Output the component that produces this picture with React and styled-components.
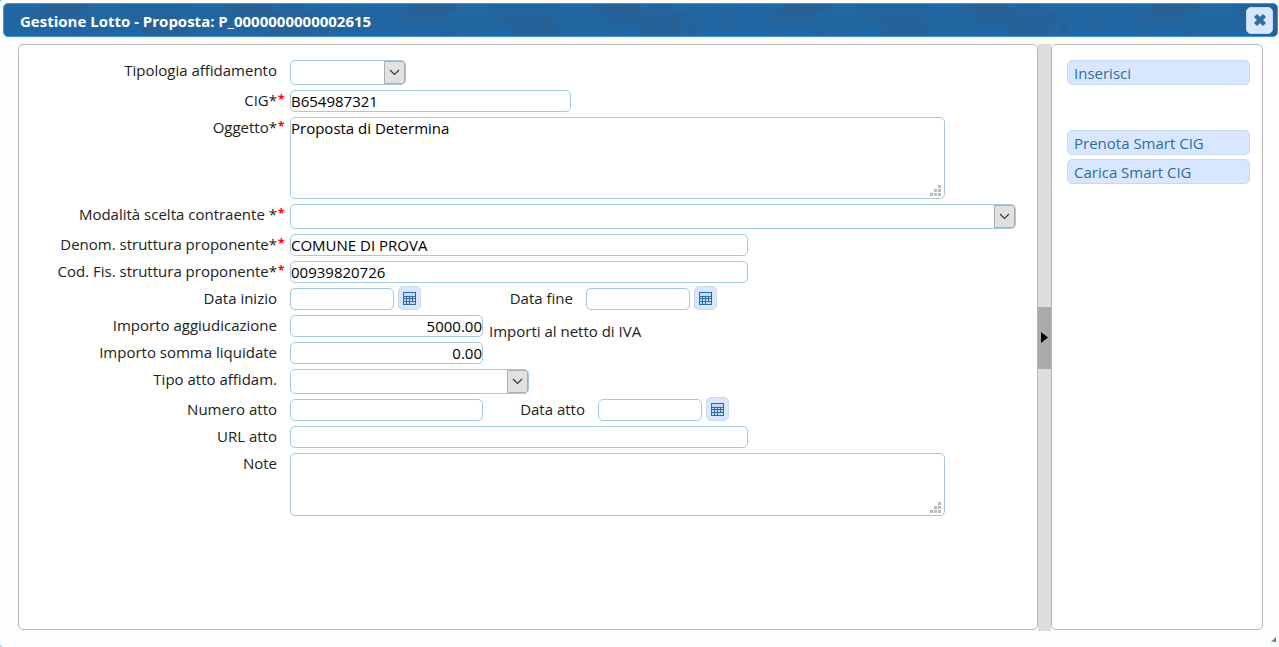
import { useState } from "react";
import styled, { createGlobalStyle } from "styled-components";

export default function App() {
  const [lotto, setLotto] = useState({
    cig: "B654987321",
    oggetto: "Proposta di Determina",
    denominazione: "COMUNE DI PROVA",
    codiceFiscale: "00939820726",
    dataInizio: "",
    dataFine: "",
    aggiudicazione: "5000.00",
    liquidate: "0.00",
    numeroAtto: "",
    dataAtto: "",
    urlAtto: "",
    note: "",
  });

  const bind = (name) => ({
    id: name,
    name,
    value: lotto[name],
    onChange: (e) => setLotto({ ...lotto, [name]: e.target.value }),
  });

  return (
    <Dialog>
      <GlobalStyle />
      <TitleBar>
        <TitlePattern />
        <Title>Gestione Lotto - Proposta: P_0000000000002615</Title>
        <CloseButton type="button" aria-label="Chiudi">
          <CloseIcon />
        </CloseButton>
      </TitleBar>
      <Body>
        <FormPanel>
          <Field id="tipologia" label="Tipologia affidamento">
            <Combo id="tipologia" width="116px" />
          </Field>
          <Field id="cig" label="CIG*" required>
            <Input $width="281px" {...bind("cig")} />
          </Field>
          <Field id="oggetto" label="Oggetto*" required>
            <Area height="82px" {...bind("oggetto")} />
          </Field>
          <Field id="modalita" label="Modalità scelta contraente *" required>
            <Combo id="modalita" width="726px" />
          </Field>
          <Field id="denominazione" label="Denom. struttura proponente*" required>
            <Input $width="458px" {...bind("denominazione")} />
          </Field>
          <Field id="codiceFiscale" label="Cod. Fis. struttura proponente*" required>
            <Input $width="458px" {...bind("codiceFiscale")} />
          </Field>
          <Field id="dataInizio" label="Data inizio">
            <DateBox {...bind("dataInizio")} />
            <Label htmlFor="dataFine" $width="152px">
              Data fine
            </Label>
            <Mark />
            <DateBox {...bind("dataFine")} />
          </Field>
          <Amounts>
            <Rows>
              <Field id="aggiudicazione" label="Importo aggiudicazione">
                <Input $width="193px" $right {...bind("aggiudicazione")} />
              </Field>
              <Field id="liquidate" label="Importo somma liquidate">
                <Input $width="193px" $right {...bind("liquidate")} />
              </Field>
            </Rows>
            <Hint>Importi al netto di IVA</Hint>
          </Amounts>
          <Field id="tipoAtto" label="Tipo atto affidam.">
            <Combo id="tipoAtto" width="239px" />
          </Field>
          <Field id="numeroAtto" label="Numero atto">
            <Input $width="193px" {...bind("numeroAtto")} />
            <Label htmlFor="dataAtto" $width="102px">
              Data atto
            </Label>
            <Mark />
            <DateBox {...bind("dataAtto")} />
          </Field>
          <Field id="urlAtto" label="URL atto">
            <Input $width="458px" {...bind("urlAtto")} />
          </Field>
          <Field id="note" label="Note">
            <Area height="63px" {...bind("note")} />
          </Field>
        </FormPanel>
        <Splitter>
          <Handle type="button" aria-label="Comprimi pannello">
            <svg width="7" height="11" viewBox="0 0 7 11">
              <path d="M0 0L7 5.5L0 11Z" fill="#000" />
            </svg>
          </Handle>
        </Splitter>
        <ActionPanel>
          <Action type="button">Inserisci</Action>
          <ActionGroup>
            <Action type="button">Prenota Smart CIG</Action>
            <Action type="button">Carica Smart CIG</Action>
          </ActionGroup>
        </ActionPanel>
      </Body>
      <ResizeCorner width="5" height="5" viewBox="0 0 5 5">
        <path d="M5 0V5H0Z" fill="#5d7385" />
        <path d="M2 4h2v1h-2z" fill="#7db6dc" />
        <path d="M1 4h1v1h-1zM3 2h1v1h-1z" fill="#c98a4a" />
      </ResizeCorner>
    </Dialog>
  );
}

function Field({ id, label, required, children }) {
  return (
    <Row>
      <Label htmlFor={id}>{label}</Label>
      <Mark>{required && "*"}</Mark>
      {children}
    </Row>
  );
}

function Combo({ id, width }) {
  return (
    <ComboBox $width={width}>
      <Select id={id} name={id} defaultValue="">
        <option value=""></option>
      </Select>
      <ComboArrow>
        <svg width="11" height="7" viewBox="0 0 11 7" fill="none">
          <path d="M1 1L5.5 5.5L10 1" stroke="#333" strokeWidth="1.1" />
        </svg>
      </ComboArrow>
    </ComboBox>
  );
}

function Area({ height, ...props }) {
  return (
    <AreaBox>
      <TextArea $height={height} {...props} />
      <Grip width="11" height="11" viewBox="0 0 11 11">
        <path
          d="M8 0h3v3h-3zM4 4h3v3h-3zM8 4h3v3h-3zM0 8h3v3h-3zM4 8h3v3h-3zM8 8h3v3h-3z"
          fill="#bbb"
        />
      </Grip>
    </AreaBox>
  );
}

function DateBox(props) {
  return (
    <>
      <Input $width="104px" {...props} />
      <CalendarButton type="button" aria-label="Apri calendario">
        <svg width="13" height="13" viewBox="0 0 13 13" shapeRendering="crispEdges">
          <path d="M0 0h13v13h-13z" fill="#2e6e9e" />
          <path d="M1 1h11v3h-11z" fill="#c6daf4" />
          <path
            d="M1 5h2v1h-2zM4 5h2v1h-2zM7 5h2v1h-2zM10 5h2v1h-2zM1 7h2v2h-2zM4 7h2v2h-2zM7 7h2v2h-2zM10 7h2v2h-2zM1 10h2v2h-2zM4 10h2v2h-2zM7 10h5v2h-5z"
            fill="#c6daf4"
          />
        </svg>
      </CalendarButton>
    </>
  );
}

function CloseIcon() {
  return (
    <svg width="12" height="12" viewBox="0 0 12 12">
      <path
        d="M3 0.5L6 3.4L9 0.5L11.5 3L8.6 6L11.5 9L9 11.5L6 8.6L3 11.5L0.5 9L3.4 6L0.5 3Z"
        fill="#2e6e9e"
        stroke="#2e6e9e"
        strokeLinejoin="round"
      />
    </svg>
  );
}

function TitlePattern() {
  return (
    <PatternSvg aria-hidden="true">
      <defs>
        <pattern
          id="roofs"
          width="370"
          height="32"
          patternUnits="userSpaceOnUse"
          patternTransform="translate(26 0)"
        >
          <path d="M16 0H62L40 17H0V12Z" fill="#266198" />
          <path d="M62 0H84L104 17H40Z" fill="#22679f" />
          <path d="M96 9H154V17H158V32H114L112 22Z" fill="#266198" />
          <path d="M84 0H158V8H96Z" fill="#21659f" />
          <path d="M200 0H237L244 8H290L276 32H240V18H204V9H187Z" fill="#266198" />
          <path
            d="M160 18h8v14h-8zM174 18h8v14h-8zM190 18h7v14h-7zM208 18h10v14h-10zM222 18h7v14h-7z"
            fill="#23659d"
          />
          <path d="M250 0h22v7h-22zM292 9h15v7h-15zM322 4h18v22h-18z" fill="#22659e" />
          <circle cx="294" cy="25" r="5" fill="#266198" />
          <circle cx="48" cy="29" r="4" fill="#266198" />
          <path d="M0 26h12v6h-12zM22 24h10v8h-10zM62 17h10v15h-10zM77 26l6-8v14h-6z" fill="#23659d" />
        </pattern>
      </defs>
      <rect width="100%" height="100%" fill="url(#roofs)" />
    </PatternSvg>
  );
}

const GlobalStyle = createGlobalStyle`
  * {
    box-sizing: border-box;
  }
  body {
    margin: 0;
    background: #a6c9e2;
    color: #222;
  }
  body, input, select, textarea, button {
    font-family: "Open Sans", "Noto Sans", sans-serif;
    font-size: 15px;
  }
`;

const Dialog = styled.div`
  position: relative;
  display: flex;
  flex-direction: column;
  min-height: 100vh;
  padding: 3px 1px 0 3px;
  border-radius: 4px 0 0 4px;
  background: #fcfdfd;
`;

const TitleBar = styled.header`
  position: relative;
  display: flex;
  justify-content: space-between;
  align-items: center;
  height: 34px;
  padding: 0 4px 0 16px;
  border: 1px solid #4297d7;
  border-radius: 5px;
  background: #2066a2;
  overflow: hidden;
`;

const PatternSvg = styled.svg`
  position: absolute;
  inset: 0;
  width: 100%;
  height: 100%;
`;

const Title = styled.h1`
  position: relative;
  margin: 0;
  padding-top: 2px;
  color: #fff;
  font-size: 15px;
  font-weight: 700;
  line-height: 22px;
`;

const CloseButton = styled.button`
  position: relative;
  display: flex;
  justify-content: center;
  align-items: center;
  width: 27px;
  height: 27px;
  padding: 0;
  border: 1px solid #c5dbec;
  border-radius: 5px;
  background: #d9e6ff;
`;

const Body = styled.main`
  display: flex;
  flex: 1;
  padding: 7px 15px 16px;
`;

const FormPanel = styled.form`
  display: flex;
  flex: 1;
  flex-direction: column;
  gap: 5px;
  min-width: 0;
  margin-bottom: 1px;
  padding: 15px 0;
  border: 1px solid #b8b8b8;
  border-radius: 5px;
  background: #fff;
`;

const Rows = styled.div`
  display: flex;
  flex-direction: column;
  gap: 5px;
`;

const Amounts = styled.div`
  display: flex;
  gap: 6px;
`;

const Row = styled.div`
  display: flex;
  align-items: flex-start;
`;

const Label = styled.label`
  width: ${({ $width }) => $width || "258px"};
  line-height: 20px;
  text-align: right;
  white-space: nowrap;
`;

const Mark = styled.span`
  width: 13px;
  padding-left: 1px;
  color: #f00;
  font-size: 12px;
  font-weight: 700;
  line-height: 20px;
`;

const Hint = styled.span`
  padding-top: 6px;
  line-height: 20px;
`;

const Input = styled.input`
  width: ${({ $width }) => $width};
  height: 22px;
  padding: 0;
  border: 1px solid #a6c9e2;
  border-radius: 5px;
  background: #fff;
  color: #000;
  text-align: ${({ $right }) => ($right ? "right" : "left")};
`;

const AreaBox = styled.div`
  position: relative;
  display: flex;
  width: 655px;
`;

const TextArea = styled.textarea`
  width: 100%;
  height: ${({ $height }) => $height};
  padding: 0;
  border: 1px solid #a6c9e2;
  border-radius: 5px;
  color: #000;
  line-height: 20px;
  resize: none;
`;

const Grip = styled.svg`
  position: absolute;
  right: 4px;
  bottom: 3px;
  pointer-events: none;
`;

const ComboBox = styled.div`
  position: relative;
  width: ${({ $width }) => $width};
  height: 25px;
`;

const Select = styled.select`
  width: 100%;
  height: 100%;
  padding: 0 24px 0 2px;
  border: 1px solid #a6c9e2;
  border-radius: 5px;
  background: #fff;
  appearance: none;
`;

const ComboArrow = styled.span`
  position: absolute;
  top: 1px;
  right: 1px;
  bottom: 1px;
  display: flex;
  justify-content: center;
  align-items: center;
  width: 21px;
  border: 1px solid #adadad;
  border-radius: 0 3px 3px 0;
  background: #e1e1e1;
  pointer-events: none;
`;

const CalendarButton = styled.button`
  display: flex;
  justify-content: center;
  align-items: center;
  width: 23px;
  height: 24px;
  margin: -2px 0 0 4px;
  padding: 0;
  border: 1px solid #c5dbec;
  border-radius: 5px;
  background: #d9e6ff;
`;

const Splitter = styled.div`
  display: flex;
  align-items: center;
  width: 13px;
  background: #ddd;
`;

const Handle = styled.button`
  display: flex;
  align-items: center;
  width: 13px;
  height: 62px;
  padding: 0 0 0 3px;
  border: 0;
  background: #aaa;
`;

const ActionPanel = styled.aside`
  display: flex;
  flex-direction: column;
  gap: 45px;
  width: 212px;
  margin-bottom: 1px;
  padding: 15px 12px 15px 15px;
  border: 1px solid #b8b8b8;
  border-radius: 5px;
  background: #fff;
`;

const ActionGroup = styled.div`
  display: flex;
  flex-direction: column;
  gap: 4px;
`;

const Action = styled.button`
  width: 100%;
  height: 25px;
  padding: 0 6px;
  border: 1px solid #c5dbec;
  border-radius: 5px;
  background: #d9e6ff;
  color: #2e6e9e;
  line-height: 22px;
  text-align: left;
`;

const ResizeCorner = styled.svg`
  position: absolute;
  right: 3px;
  bottom: 5px;
`;
